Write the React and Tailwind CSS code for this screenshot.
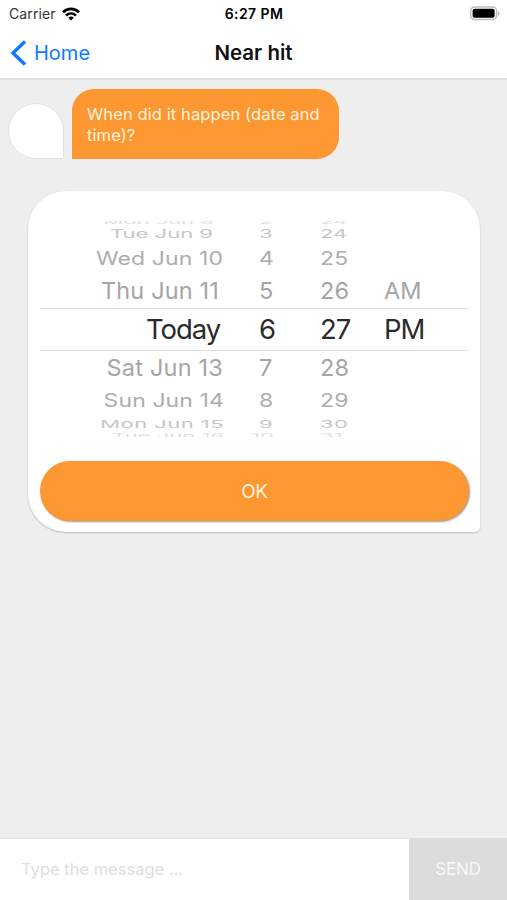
import { useState } from 'react'

// scale and row height follow the perspective of the wheel, end is the gap after the date
const ROWS = [
    { date: 'Mon Jun 8', hour: '2', minute: '24', row: 'h-[2px] mb-[3px] text-[22px] text-[#dedede]', end: 'pr-[10px]', scale: 'scale-y-[0.3]' },
    { date: 'Tue Jun 9', hour: '3', minute: '24', row: 'h-4 text-[22px] text-[#c6c6c6]', end: 'pr-[11px]', scale: 'scale-y-[0.52]' },
    { date: 'Wed Jun 10', hour: '4', minute: '25', row: 'h-8 text-[23px] tracking-[0.1px] text-[#adadad]', end: 'pr-px', scale: 'scale-y-[0.8]' },
    { date: 'Thu Jun 11', hour: '5', minute: '26', period: 'AM', row: 'h-[34px] text-[23.5px] tracking-[0.15px] text-[#a5a5a5]', end: 'pr-[5px]', scale: 'scale-y-100' },
    { date: 'Today', hour: '6', minute: '27', period: 'PM', row: 'h-[43px] text-[27.5px] tracking-[-1.1px] text-[#2b2b2b] border-y border-[#dcdcdc]', end: 'pr-1', scale: 'scale-y-100' },
    { date: 'Sat Jun 13', hour: '7', minute: '28', row: 'h-[34px] text-[23.5px] tracking-[0.2px] text-[#a5a5a5]', end: 'pr-px', scale: 'scale-y-100' },
    { date: 'Sun Jun 14', hour: '8', minute: '29', row: 'h-8 text-[23px] tracking-[0.1px] text-[#adadad]', end: 'pr-0', scale: 'scale-y-[0.8]' },
    { date: 'Mon Jun 15', hour: '9', minute: '30', row: 'h-[14px] text-[22px] tracking-[0.45px] text-[#c6c6c6]', end: 'pr-0', scale: 'scale-y-[0.5]' },
    { date: 'Tue Jun 16', hour: '10', minute: '31', row: 'h-1 mt-[3px] text-[22px] text-[#dedede]', end: 'pr-0', scale: 'scale-y-[0.3]' },
]

function StatusBar() {
    return (
        <div className="grid grid-cols-3 items-center h-[27px] pl-[9px] pr-[7px] text-black">
            <div className="flex items-center gap-[6px]">
                <span className="text-[14px] tracking-[0.1px] text-[#333]">Carrier</span>
                <svg width="18" height="14" viewBox="0 0 18 14" fill="none" stroke="#000" strokeWidth="2.6">
                    <path d="M1 5.2C5.6.7 12.4.7 17 5.2" />
                    <path d="M4 8.6c2.9-2.8 7.1-2.8 10 0" />
                    <path d="M9 13.4 6.2 10.7c1.6-1.5 4-1.5 5.6 0z" fill="#000" stroke="none" />
                </svg>
            </div>
            <span className="text-[14px] tracking-[0.4px] font-semibold text-center pr-px">6:27 PM</span>
            <svg className="justify-self-end" width="31" height="15" viewBox="0 0 31 15">
                <rect x="1.6" y="1" width="26" height="12.6" rx="4" fill="#fff" stroke="#bdbdbd" strokeWidth="1.5" />
                <rect x="3.6" y="2.8" width="22" height="9" rx="2" fill="#000" />
                <path d="M29 5.2c2 .8 2 3.8 0 4.6z" fill="#bdbdbd" />
            </svg>
        </div>
    )
}

function NavBar() {
    return (
        <div className="grid grid-cols-3 items-center h-[51px] pl-[10px]">
            <button className="flex items-center gap-[7px] text-[20px] text-[#0b7bff]">
                <svg width="17" height="26" viewBox="0 0 17 26" fill="none" stroke="currentColor" strokeWidth="3.4">
                    <path d="M15 1.5 3 13l12 11.5" />
                </svg>
                Home
            </button>
            <h1 className="text-[20.5px] font-semibold text-center text-[#111] pt-[2px] pr-[10px]">Near hit</h1>
        </div>
    )
}

function Picker() {
    return (
        <div className="h-[216px] overflow-hidden">
            {ROWS.map((item) => (
                <div
                    key={item.date}
                    className={`grid grid-cols-[184px_96px_64px_84px] grid-rows-[100%] items-center leading-none whitespace-nowrap ${item.row}`}
                >
                    <span className={`text-right ${item.end} ${item.scale}`}>{item.date}</span>
                    <span className={`${item.hour === '10' ? 'pl-[27px]' : 'pl-[35px]'} ${item.scale}`}>{item.hour}</span>
                    <span className={item.scale}>{item.minute}</span>
                    <span className={item.scale}>{item.period}</span>
                </div>
            ))}
        </div>
    )
}

export default function App() {
    const [message, setMessage] = useState('')

    return (
        <div className="flex flex-col w-[507px] h-[900px] overflow-hidden bg-[#eeeeee] font-['Inter',sans-serif]">
            <header className="bg-white border-b-2 border-[#e4e4e4] h-[80px]">
                <StatusBar />
                <NavBar />
            </header>

            <main className="flex-1">
                <div className="flex items-end gap-[8px] pt-[9px] pl-[8px]">
                    <div className="size-[56px] bg-white border border-[#e0e2e2] rounded-[28px] rounded-br-none" />
                    <div className="w-[267px] h-[70px] pt-[15px] pl-[15px] rounded-[22px] rounded-bl-none bg-[#fc9732] text-[#fff3dc] text-[16.5px] tracking-[0.1px] leading-[21px]">
                        When did it happen (date and<br />time)?
                    </div>
                </div>

                <section className="mt-[32px] ml-[28px] w-[452px] h-[341px] pt-[30px] px-[12px] bg-white rounded-[38px] rounded-br-[5px] shadow-[0_1px_2px_rgba(0,0,0,0.22)]">
                    <Picker />
                    <button className="block mt-[24px] w-[429px] h-[60px] pt-[2px] rounded-full bg-[#fc9732] text-[#fff3dc] text-[19px] tracking-[-0.3px] shadow-[1px_1px_2px_rgba(0,0,0,0.4)]">
                        OK
                    </button>
                </section>
            </main>

            <footer className="flex h-[62px] border-t border-[#dedede] bg-white">
                <input
                    className="flex-1 min-w-0 pl-[21px] text-[16.5px] placeholder:text-[#dedede] outline-none"
                    placeholder="Type the message ..."
                    value={message}
                    onChange={(e) => setMessage(e.target.value)}
                />
                <button className="w-[98px] pt-px bg-[#dcdcdc] text-[#f8f8f8] text-[17px] tracking-[-0.2px]">SEND</button>
            </footer>
        </div>
    )
}
